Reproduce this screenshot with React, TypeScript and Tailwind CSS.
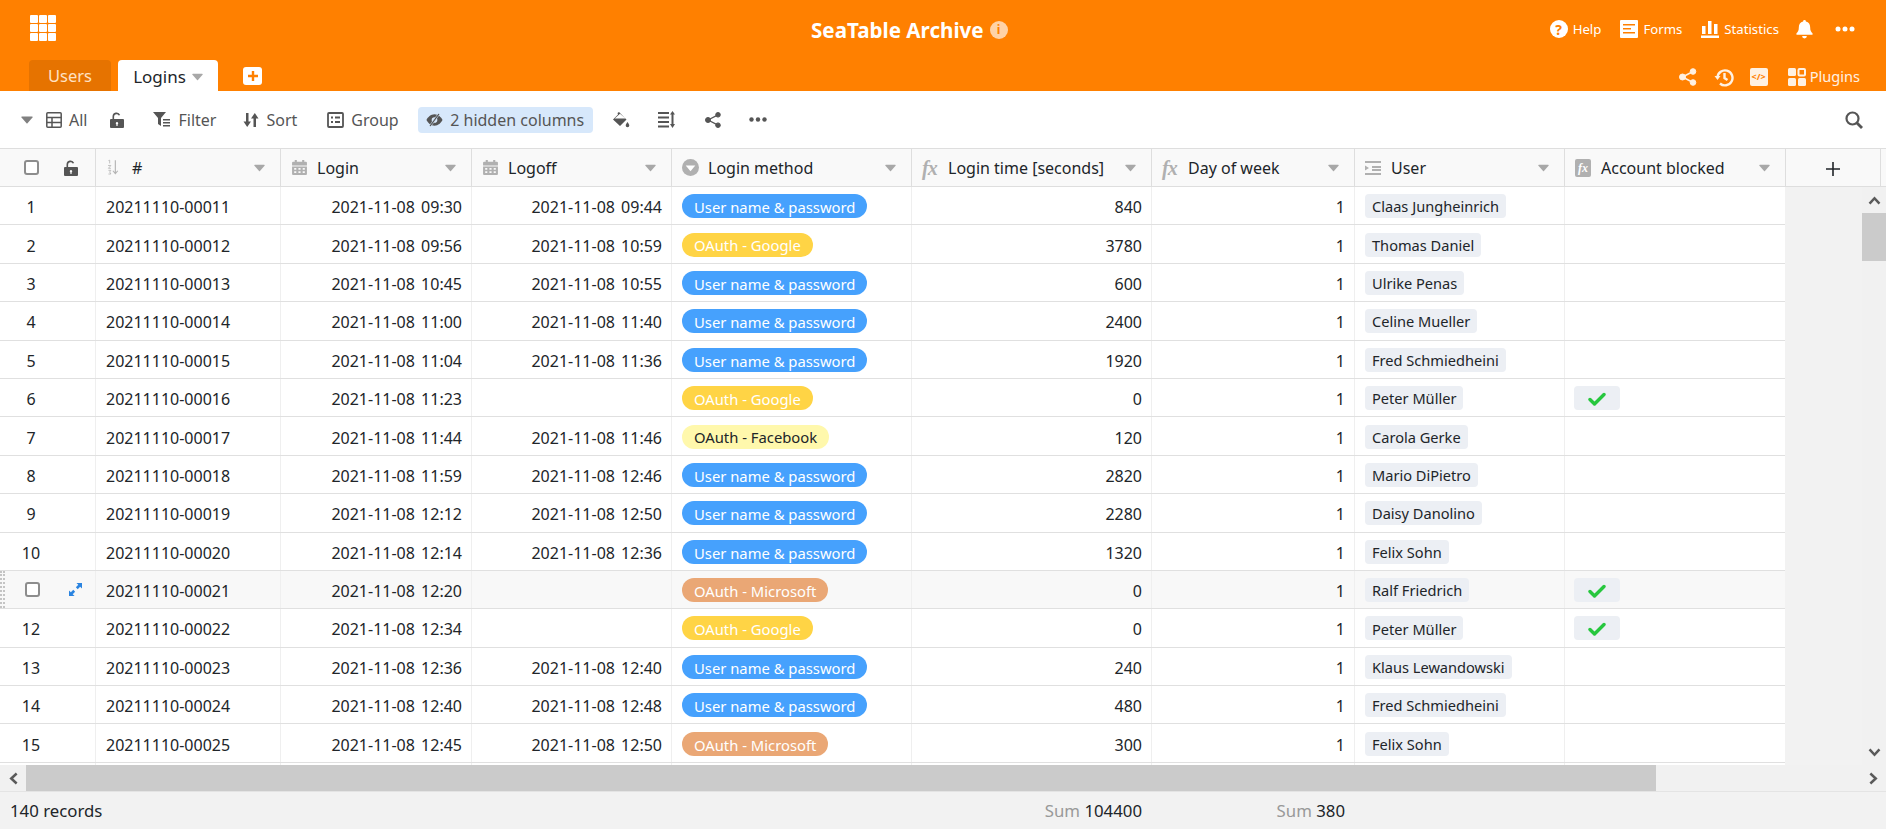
import React from "react";

// column widths measured from the page (zoomed 120%)
const COLS = {
  index: "w-[96px]",
  id: "w-[185px]",
  login: "w-[191px]",
  logoff: "w-[200px]",
  method: "w-[240px]",
  time: "w-[240px]",
  day: "w-[203px]",
  user: "w-[210px]",
  blocked: "w-[221px]",
};

type Method = "pw" | "google" | "facebook" | "microsoft";

const PILLS: Record<Method, { label: string; className: string }> = {
  pw: { label: "User name & password", className: "bg-[#46a1fd] text-white" },
  google: { label: "OAuth - Google", className: "bg-[#ffd445] text-white" },
  facebook: { label: "OAuth - Facebook", className: "bg-[#fff8ac] text-[#212529]" },
  microsoft: { label: "OAuth - Microsoft", className: "bg-[#eaa775] text-white" },
};

const ROWS: { n: number; id: string; login: string; logoff: string; method: Method; time: number; user: string; blocked?: boolean }[] = [
  { n: 1, id: "20211110-00011", login: "09:30", logoff: "09:44", method: "pw", time: 840, user: "Claas Jungheinrich" },
  { n: 2, id: "20211110-00012", login: "09:56", logoff: "10:59", method: "google", time: 3780, user: "Thomas Daniel" },
  { n: 3, id: "20211110-00013", login: "10:45", logoff: "10:55", method: "pw", time: 600, user: "Ulrike Penas" },
  { n: 4, id: "20211110-00014", login: "11:00", logoff: "11:40", method: "pw", time: 2400, user: "Celine Mueller" },
  { n: 5, id: "20211110-00015", login: "11:04", logoff: "11:36", method: "pw", time: 1920, user: "Fred Schmiedheini" },
  { n: 6, id: "20211110-00016", login: "11:23", logoff: "", method: "google", time: 0, user: "Peter Müller", blocked: true },
  { n: 7, id: "20211110-00017", login: "11:44", logoff: "11:46", method: "facebook", time: 120, user: "Carola Gerke" },
  { n: 8, id: "20211110-00018", login: "11:59", logoff: "12:46", method: "pw", time: 2820, user: "Mario DiPietro" },
  { n: 9, id: "20211110-00019", login: "12:12", logoff: "12:50", method: "pw", time: 2280, user: "Daisy Danolino" },
  { n: 10, id: "20211110-00020", login: "12:14", logoff: "12:36", method: "pw", time: 1320, user: "Felix Sohn" },
  { n: 11, id: "20211110-00021", login: "12:20", logoff: "", method: "microsoft", time: 0, user: "Ralf Friedrich", blocked: true },
  { n: 12, id: "20211110-00022", login: "12:34", logoff: "", method: "google", time: 0, user: "Peter Müller", blocked: true },
  { n: 13, id: "20211110-00023", login: "12:36", logoff: "12:40", method: "pw", time: 240, user: "Klaus Lewandowski" },
  { n: 14, id: "20211110-00024", login: "12:40", logoff: "12:48", method: "pw", time: 480, user: "Fred Schmiedheini" },
  { n: 15, id: "20211110-00025", login: "12:45", logoff: "12:50", method: "microsoft", time: 300, user: "Felix Sohn" },
];

// Small drawn icons
const Caret = ({ className = "" }: { className?: string }) => (
  <svg viewBox="0 0 12 8" className={`w-[11px] h-[8px] ${className}`} fill="currentColor">
    <path d="M1 0.5h10a.7.7 0 0 1 .5 1.1L6.5 7.3a.7.7 0 0 1-1 0L.5 1.6A.7.7 0 0 1 1 .5z" />
  </svg>
);

const Calendar = () => (
  <svg viewBox="0 0 16 16" className="w-[17px] h-[17px] text-[#b0b0b0]" fill="currentColor">
    <path d="M1 3.5a1 1 0 0 1 1-1h1.5V1h2v1.5h5V1h2v1.5H14a1 1 0 0 1 1 1V6H1z" />
    <path fillRule="evenodd" d="M1 7h14v7a1 1 0 0 1-1 1H2a1 1 0 0 1-1-1zm2 1.5v1.6h2V8.500zm4 0v1.6h2V8.500zm4 0v1.6h2V8.500zm-8 3v1.600h2V11.500zm4 0v1.600h2V11.500zm4 0v1.600h2V11.500z" />
  </svg>
);

const SortNumbers = () => (
  <svg viewBox="0 0 16 20" className="w-[13px] h-[17px] text-[#b4b4b4]" fill="none" stroke="currentColor">
    <path d="M3 1.500 4.500 1v4M2.500 7.500h3.500L3 11h3M3 13.500h3l-1.500 2 1.500 2.500H3" strokeWidth="1" />
    <path d="M11.500 1v16M8.500 14l3 3.500 3-3.500" strokeWidth="1.400" />
  </svg>
);

const Fx = () => (
  <span className="font-['Liberation_Serif',serif] italic font-bold text-[20px] leading-none text-[#b0b0b0] w-[17px] whitespace-nowrap tracking-[-1px]">fx</span>
);

const Lock = ({ className = "" }: { className?: string }) => (
  <svg viewBox="0 0 14 16" className={`w-[14px] h-4 ${className}`} fill="currentColor">
    <path fillRule="evenodd" d="M1 7h12a1 1 0 0 1 1 1v7a1 1 0 0 1-1 1H1a1 1 0 0 1-1-1V8a1 1 0 0 1 1-1zm6 3a1.300 1.300 0 0 0-.6 2.400V14h1.200v-1.600A1.300 1.300 0 0 0 7 10z" />
    <path d="M2.500 7V4.500a4 4 0 0 1 7.700-1.500l-1.500.6A2.400 2.400 0 0 0 4.100 4.500V7z" />
  </svg>
);

const Check = () => (
  <svg viewBox="0 0 18 14" className="w-[18px] h-[14px] text-[#27c73e] mt-[3px]" fill="none" stroke="currentColor" strokeWidth="3.400" strokeLinecap="round" strokeLinejoin="round">
    <path d="M2 7.500 6.500 12 16 2.500" />
  </svg>
);

const HeaderCell = ({ width, icon, label }: { width: string; icon: React.ReactNode; label: string }) => (
  <div className={`${width} shrink-0 flex items-center pl-[10px] pr-[15px] border-r border-[#dedede] text-[16px] text-[#212529]`}>
    <div className="w-[26px] shrink-0 flex items-center">{icon}</div>
    <span className="flex-1 whitespace-nowrap">{label}</span>
    <Caret className="text-[#a8a8a8]" />
  </div>
);

const Cell = ({ width, right, children }: { width: string; right?: boolean; children?: React.ReactNode }) => (
  <div className={`${width} shrink-0 h-full flex items-center border-r border-[#efefef] pt-[3px] ${right ? "justify-end pr-[9px]" : "pl-[10px]"}`}>
    {children}
  </div>
);

const ChipCell = ({ width, children }: { width: string; children: React.ReactNode }) => (
  <div className={`${width} shrink-0 h-full flex items-center border-r border-[#efefef] pt-[1px] pl-[10px]`}>
    {children}
  </div>
);

const ToolItem = ({ icon, label, className = "" }: { icon: React.ReactNode; label?: string; className?: string }) => (
  <div className={`flex items-center gap-[7px] text-[#555] ${className}`}>
    {icon}
    {label && <span>{label}</span>}
  </div>
);

const TableRow = ({ row }: { row: (typeof ROWS)[number] }) => {
  const hovered = row.n === 11;
  const pill = PILLS[row.method];
  return (
    <div className={`relative flex h-[38.4px] shrink-0 border-b border-[#e0e0e0] text-[16px] text-[#212529] ${hovered ? "bg-[#f8f8f8]" : "bg-white"}`}>
      <div className={`${COLS.index} shrink-0 h-full flex items-center border-r border-[#efefef]`}>
        {hovered ? (
          <>
            <span className="w-[5px] h-full ml-0 border-x-2 border-dotted border-[#c4c4c4]" />
            <span className="w-[15px] h-[15px] ml-[20px] border-2 border-[#8d8d8d] rounded-[3px] bg-white" />
            <svg viewBox="0 0 14 14" className="w-[13px] h-[13px] ml-[29px] text-[#2b84e0]" fill="currentColor">
              <path d="M8 0h6v6l-2-2-2.600 2.600-2-2L10 2zM6 14H0V8l2 2 2.600-2.600 2 2L4 12z" />
            </svg>
          </>
        ) : (
          <span className="w-[62px] text-center pt-[3px]">{row.n}</span>
        )}
      </div>
      <Cell width={COLS.id}>{row.id}</Cell>
      <Cell width={COLS.login} right><span className="[word-spacing:2px]">2021-11-08 {row.login}</span></Cell>
      <Cell width={COLS.logoff} right><span className="[word-spacing:2px]">{row.logoff && `2021-11-08 ${row.logoff}`}</span></Cell>
      <ChipCell width={COLS.method}>
        <span className={`h-6 px-3 pt-[2px] rounded-full flex items-center text-[14.8px] whitespace-nowrap ${pill.className}`}>{pill.label}</span>
      </ChipCell>
      <Cell width={COLS.time} right>{row.time}</Cell>
      <Cell width={COLS.day} right>1</Cell>
      <ChipCell width={COLS.user}>
        <span className="h-6 px-[7px] pt-[2px] rounded bg-[#eceff4] flex items-center text-[14.6px] whitespace-nowrap">{row.user}</span>
      </ChipCell>
      <div className={`${COLS.blocked} shrink-0 h-full flex items-center pl-[9px]`}>
        {row.blocked && (
          <span className="w-[46px] h-6 rounded bg-[#eceff4] flex items-center justify-center"><Check /></span>
        )}
      </div>
    </div>
  );
};

export default function App() {
  return (
    <div className="w-[1886px] h-[829px] flex flex-col overflow-hidden bg-white font-['Noto_Sans',sans-serif]">
      {/* Orange header */}
      <header className="h-[91px] shrink-0 bg-[#ff8000] text-white flex flex-col">
        <div className="h-[60px] flex items-center pl-[30px] pr-[31px]">
          <svg viewBox="0 0 26 26" className="w-[26px] h-[26px] -mt-[4px] shrink-0" fill="white">
            <rect x="0" y="0" width="8" height="8" rx="1" /><rect x="9" y="0" width="8" height="8" rx="1" /><rect x="18" y="0" width="8" height="8" rx="1" />
            <rect x="0" y="9" width="8" height="8" rx="1" /><rect x="9" y="9" width="8" height="8" rx="1" /><rect x="18" y="9" width="8" height="8" rx="1" />
            <rect x="0" y="18" width="8" height="8" rx="1" /><rect x="9" y="18" width="8" height="8" rx="1" /><rect x="18" y="18" width="8" height="8" rx="1" />
          </svg>
          <div className="flex-1 flex items-center gap-[6px] ml-[755px]">
            <span className="text-[20.6px] font-bold whitespace-nowrap">SeaTable Archive</span>
            <span className="w-[18px] h-[18px] rounded-full bg-[#ffd2a6] text-[#ff8000] text-[12px] font-bold flex items-center justify-center">i</span>
          </div>
          <div className="flex items-center text-[13.2px] -mt-[1px]">
            <span className="w-[18px] h-[18px] rounded-full bg-white text-[#ff8000] text-[14px] font-bold flex items-center justify-center">?</span>
            <span className="ml-[5px]">Help</span>
            <svg viewBox="0 0 18 18" className="w-[18px] h-[18px] ml-[19px]" fill="white">
              <path fillRule="evenodd" d="M1 0h16a1 1 0 0 1 1 1v16a1 1 0 0 1-1 1H1a1 1 0 0 1-1-1V1a1 1 0 0 1 1-1zm2 4v1.500h12V4zm0 4v1.500h8V8zm0 4v1.500h12V12z" />
            </svg>
            <span className="ml-[5px]">Forms</span>
            <svg viewBox="0 0 18 18" className="w-[18px] h-[18px] ml-[19px]" fill="white">
              <path d="M1 6h3.500v8H1zM7 1h3.500v13H7zM13 4h3.500v10H13zM0 15.500h18V18H0z" />
            </svg>
            <span className="ml-[5px]">Statistics</span>
            <svg viewBox="0 0 18 20" className="w-[17px] h-[19px] ml-[17px]" fill="white">
              <path d="M9 0a1.500 1.500 0 0 1 1.500 1.500c3 .7 4.500 3 4.500 6 0 3.500 1 5 2.500 6.500v1.500H.500V14C2 12.500 3 11 3 7.500c0-3 1.500-5.300 4.500-6A1.500 1.500 0 0 1 9 0zM6.500 17h5a2.500 2.500 0 0 1-5 0z" />
            </svg>
            <svg viewBox="0 0 20 6" className="w-[20px] h-[6px] ml-[22px]" fill="white">
              <circle cx="3" cy="3" r="2.500" /><circle cx="10" cy="3" r="2.500" /><circle cx="17" cy="3" r="2.500" />
            </svg>
          </div>
        </div>
        <div className="h-[31px] flex items-end pl-[29px] pr-[26px]">
          <div className="w-[82px] h-[31px] pt-[2px] rounded-t bg-[#e67300] text-[#ffe2c4] text-[16.5px] flex items-center justify-center">Users</div>
          <div className="w-[100px] h-[31px] pt-[2px] ml-[7px] rounded-t bg-white text-[#212529] text-[17px] flex items-center justify-center gap-[6px]">
            Logins <Caret className="text-[#a8a8a8]" />
          </div>
          <span className="w-[19px] h-[18px] ml-[25px] mb-[6px] rounded-[3px] bg-white flex items-center justify-center">
            <svg viewBox="0 0 12 12" className="w-3 h-3" stroke="#ff8000" strokeWidth="2.400"><path d="M6 1v10M1 6h10" /></svg>
          </span>
          <div className="flex-1" />
          <div className="flex items-center text-[#fff1e2] text-[14.6px] h-[31px] -mt-[1px] pt-[2px]">
            <svg viewBox="0 0 18 18" className="w-[18px] h-[18px]" fill="#fff1e2" stroke="#fff1e2">
              <circle cx="3.500" cy="9" r="3" /><circle cx="14" cy="3.500" r="2.800" /><circle cx="14" cy="14.500" r="2.800" />
              <path d="M3.500 9 14 3.500M3.500 9 14 14.500" strokeWidth="1.500" />
            </svg>
            <svg viewBox="0 0 20 20" className="w-[20px] h-[20px] ml-[17px]" fill="none" stroke="#fff1e2" strokeWidth="2.400">
              <path d="M3.500 10.500A7.500 7.500 0 1 1 6 16.500" /><path d="M10.500 6v5l3 2" />
              <path d="M.500 9h6l-3 4z" fill="#fff1e2" stroke="none" />
            </svg>
            <span className="w-[18px] h-[18px] ml-[16px] rounded-[2px] bg-[#fff1e2] text-[#ff8000] text-[9px] font-bold flex items-center justify-center leading-none">&lt;/&gt;</span>
            <svg viewBox="0 0 18 18" className="w-[18px] h-[18px] ml-[20px]" fill="#fff1e2">
              <rect x="0" y="0" width="8" height="8" rx="1.500" />
              <rect x="10.500" y="1" width="6.500" height="6.500" rx="1" fill="none" stroke="#fff1e2" strokeWidth="2" />
              <rect x="0" y="10" width="8" height="8" rx="1.500" /><rect x="10" y="10" width="8" height="8" rx="1.500" />
            </svg>
            <span className="ml-[4px]">Plugins</span>
          </div>
        </div>
      </header>

      {/* Toolbar */}
      <div className="h-[57px] shrink-0 flex items-center pl-[21px] pr-[23px] text-[16px]">
        <Caret className="text-[#808080] w-[12px]" />
        <ToolItem
          className="ml-[13px]"
          label="All"
          icon={
            <svg viewBox="0 0 16 16" className="w-4 h-4" fill="none" stroke="#555" strokeWidth="1.500">
              <rect x=".8" y=".8" width="14.400" height="14.400" rx="1" /><path d="M.8 5.500h14.400M.8 10.500h14.400M6 5.500v9.700" />
            </svg>
          }
        />
        <Lock className="text-[#555] ml-[23px]" />
        <ToolItem
          className="ml-[29px]"
          label="Filter"
          icon={
            <svg viewBox="0 0 18 15" className="w-[18px] h-[15px]" fill="#555">
              <path d="M0 0h13l-5 6v8L5 12V6zM10 7h7v1.500h-7zM10 10h7v1.500h-7zM10 13h7v1.500h-7z" />
            </svg>
          }
        />
        <ToolItem
          className="ml-[27px]"
          label="Sort"
          icon={
            <svg viewBox="0 0 16 16" className="w-4 h-4" fill="#555">
              <path d="M3 1h2.500v8.500H8L4.200 15 .5 9.500H3zM10.500 15H13V6.500h2.500L11.800 1 8 6.500h2.500z" />
            </svg>
          }
        />
        <ToolItem
          className="ml-[30px]"
          label="Group"
          icon={
            <svg viewBox="0 0 17 16" className="w-[17px] h-4" fill="none" stroke="#555" strokeWidth="1.800">
              <rect x="1" y="1" width="15" height="14" rx="1" /><path d="M4 5.500h2M8 5.500h5M4 10h2M8 10h5" strokeWidth="2" />
            </svg>
          }
        />
        <div className="ml-[19px] h-[26px] w-[175px] rounded bg-[#d7e8fb] flex items-center justify-center gap-[7px] text-[#555]">
          <svg viewBox="0 0 18 14" className="w-[17px] h-[14px]" fill="#555">
            <path d="M9 1c4 0 7 3 8.500 6-1.500 3-4.500 6-8.500 6S2 10 .5 7C2 4 5 1 9 1zm0 3a3 3 0 1 0 0 6 3 3 0 0 0 0-6z" />
            <path d="M13 0l1.500 1L5 14l-1.500-1z" stroke="#d7e8fb" strokeWidth=".6" />
          </svg>
          <span className="whitespace-nowrap">2 hidden columns</span>
        </div>
        <svg viewBox="0 0 18 16" className="w-[18px] h-4 ml-[19px]" fill="#555">
          <path d="M7 0l1 1 6.500 6.500L8 14 1 7.500 6 2.500 5.500 1zM13.500 6.500H2.700L8 1.800z" fillRule="evenodd" />
          <path d="M15.500 10c1 1.500 1.800 2.500 1.800 3.500a1.800 1.800 0 0 1-3.600 0c0-1 .8-2 1.800-3.500z" />
        </svg>
        <svg viewBox="0 0 17 17" className="w-[17px] h-[17px] ml-[28px]" fill="#555">
          <path d="M0 1h11v2H0zM0 5.500h11v2H0zM0 10h11v2H0zM0 14.500h11v2H0zM13.500 3.500V13H12l2.500 4 2.500-4h-1.500V3.500H17L14.500 0 12 3.500z" />
        </svg>
        <svg viewBox="0 0 16 16" className="w-4 h-4 ml-[30px]" fill="#555" stroke="#555">
          <circle cx="3" cy="8" r="2.500" /><circle cx="13" cy="2.800" r="2.300" /><circle cx="13" cy="13.200" r="2.300" />
          <path d="M3 8l10-5.200M3 8l10 5.200" strokeWidth="1.300" />
        </svg>
        <svg viewBox="0 0 18 5" className="w-[18px] h-[5px] ml-[28px]" fill="#555">
          <circle cx="2.500" cy="2.500" r="2.200" /><circle cx="9" cy="2.500" r="2.200" /><circle cx="15.500" cy="2.500" r="2.200" />
        </svg>
        <div className="flex-1" />
        <svg viewBox="0 0 18 18" className="w-[18px] h-[18px]" fill="none" stroke="#555" strokeWidth="2.200">
          <circle cx="7.500" cy="7.500" r="6" /><path d="M12 12l5 5" strokeWidth="2.800" />
        </svg>
      </div>

      {/* Column headers */}
      <div className="h-[39px] shrink-0 flex bg-[#f9f9f9] border-y border-[#dedede] pr-[1px]">
        <div className={`${COLS.index} shrink-0 flex items-center border-r border-[#dedede]`}>
          <span className="w-[15px] h-[15px] ml-[24px] border-2 border-[#8d8d8d] rounded-[3px] bg-white" />
          <Lock className="text-[#555] ml-[25px]" />
        </div>
        <HeaderCell width={COLS.id} icon={<SortNumbers />} label="#" />
        <HeaderCell width={COLS.login} icon={<Calendar />} label="Login" />
        <HeaderCell width={COLS.logoff} icon={<Calendar />} label="Logoff" />
        <HeaderCell
          width={COLS.method}
          label="Login method"
          icon={
            <svg viewBox="0 0 16 16" className="w-[17px] h-[17px]">
              <circle cx="8" cy="8" r="8" fill="#b0b0b0" /><path d="M3.500 6h9L8 11.500z" fill="white" />
            </svg>
          }
        />
        <HeaderCell width={COLS.time} icon={<Fx />} label="Login time [seconds]" />
        <HeaderCell width={COLS.day} icon={<Fx />} label="Day of week" />
        <HeaderCell
          width={COLS.user}
          label="User"
          icon={
            <svg viewBox="0 0 16 14" className="w-4 h-[14px]" fill="#b0b0b0">
              <path d="M0 0h16v2H0zM7 5h9v2H7zM7 8h9v2H7zM0 12h16v2H0zM0 4.500l4 2.500-4 2.500z" />
            </svg>
          }
        />
        <HeaderCell
          width={COLS.blocked}
          label="Account blocked"
          icon={
            <span className="w-4 h-[18px] rounded-[2px] bg-[#b0b0b0] flex items-center justify-center text-white italic font-bold text-[12px] leading-none font-['Liberation_Serif',serif]">fx</span>
          }
        />
        <div className="w-[95px] shrink-0 flex items-center justify-center border-r border-[#dedede]">
          <svg viewBox="0 0 14 14" className="w-[14px] h-[14px] mt-[3px]" stroke="#212529" strokeWidth="1.600"><path d="M7 0v14M0 7h14" /></svg>
        </div>
      </div>

      {/* Records and vertical scrollbar */}
      <div className="h-[578px] shrink-0 flex overflow-hidden bg-[#f2f2f2]">
        <div className="w-[1785px] shrink-0 flex flex-col overflow-hidden">
          {ROWS.map((row) => <TableRow key={row.n} row={row} />)}
          <div className="flex h-[20px] shrink-0 bg-white">
            <div className={`${COLS.index} shrink-0 border-r border-[#efefef]`} />
            <div className={`${COLS.id} shrink-0 border-r border-[#efefef]`} />
            <div className={`${COLS.login} shrink-0 border-r border-[#efefef]`} />
            <div className={`${COLS.logoff} shrink-0 border-r border-[#efefef]`} />
            <div className={`${COLS.method} shrink-0 border-r border-[#efefef]`} />
            <div className={`${COLS.time} shrink-0 border-r border-[#efefef]`} />
            <div className={`${COLS.day} shrink-0 border-r border-[#efefef]`} />
            <div className={`${COLS.user} shrink-0 border-r border-[#efefef]`} />
          </div>
        </div>
        <div className="flex-1" />
        <div className="w-[24px] shrink-0 flex flex-col bg-[#f1f1f1]">
          <div className="h-[26px] shrink-0 flex items-center justify-center">
            <svg viewBox="0 0 14 10" className="w-[13px] h-[9px]" fill="none" stroke="#5a5a5a" strokeWidth="2.800"><path d="M1.500 8.500 7 2.500l5.500 6" /></svg>
          </div>
          <div className="h-[48px] shrink-0 bg-[#cbcbcb]" />
          <div className="flex-1" />
          <div className="h-[26px] shrink-0 flex items-center justify-center">
            <svg viewBox="0 0 14 10" className="w-[13px] h-[9px]" fill="none" stroke="#5a5a5a" strokeWidth="2.800"><path d="M1.500 1.500 7 7.500l5.500-6" /></svg>
          </div>
        </div>
      </div>

      {/* Horizontal scrollbar */}
      <div className="h-[26px] shrink-0 flex bg-[#f1f1f1]">
        <div className="w-[26px] shrink-0 flex items-center justify-center">
          <svg viewBox="0 0 10 14" className="w-[9px] h-[13px]" fill="none" stroke="#5a5a5a" strokeWidth="2.800"><path d="M8.500 1.500 2.500 7l6 5.500" /></svg>
        </div>
        <div className="w-[1630px] shrink-0 bg-[#cbcbcb]" />
        <div className="flex-1" />
        <div className="w-[26px] shrink-0 flex items-center justify-center">
          <svg viewBox="0 0 10 14" className="w-[9px] h-[13px]" fill="none" stroke="#5a5a5a" strokeWidth="2.800"><path d="M1.500 1.500 7.500 7l-6 5.500" /></svg>
        </div>
      </div>

      {/* Footer */}
      <div className="flex-1 flex items-center bg-[#f2f2f2] border-t border-[#e4e4e4] text-[16.8px] text-[#212529]">
        <div className="w-[911px] shrink-0 pl-[10px]">140 records</div>
        <div className={`${COLS.time} shrink-0 text-right pr-[9px]`}><span className="text-[#999]">Sum</span> 104400</div>
        <div className={`${COLS.day} shrink-0 text-right pr-[9px]`}><span className="text-[#999]">Sum</span> 380</div>
      </div>
    </div>
  );
}
